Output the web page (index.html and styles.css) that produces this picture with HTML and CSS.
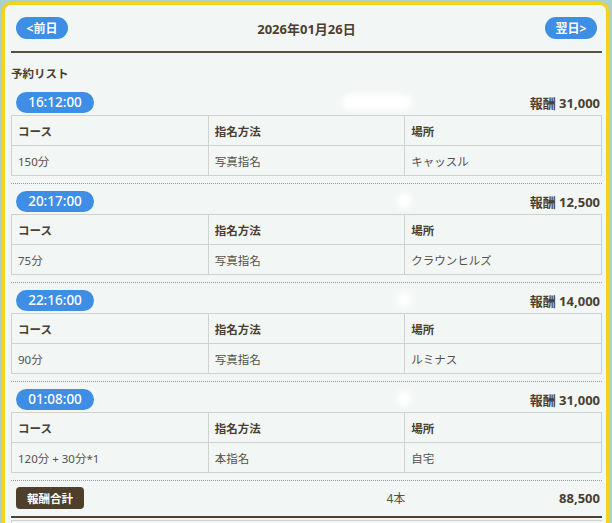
FILE: index.html
```html
<!DOCTYPE html>
<html lang="ja">
<head>
<meta charset="utf-8">
<title>予約リスト</title>
<link rel="stylesheet" href="styles.css">
</head>
<body>
<div class="panel">
  <div class="daybar">
    <a class="pill nav-btn">&lt;前日</a>
    <div class="date">2026年01月26日</div>
    <a class="pill nav-btn">翌日&gt;</a>
  </div>
  <div class="list-label">予約リスト</div>

  <div class="entry">
    <div class="entry-head">
      <span class="pill time">16:12:00</span>
      <span class="blur blur-wide"></span>
      <span class="reward">報酬 31,000</span>
    </div>
    <table class="detail">
      <tr><th>コース</th><th>指名方法</th><th>場所</th></tr>
      <tr><td>150分</td><td>写真指名</td><td>キャッスル</td></tr>
    </table>
  </div>

  <div class="entry">
    <div class="entry-head">
      <span class="pill time">20:17:00</span>
      <span class="blur"></span>
      <span class="reward">報酬 12,500</span>
    </div>
    <table class="detail">
      <tr><th>コース</th><th>指名方法</th><th>場所</th></tr>
      <tr><td>75分</td><td>写真指名</td><td>クラウンヒルズ</td></tr>
    </table>
  </div>

  <div class="entry">
    <div class="entry-head">
      <span class="pill time">22:16:00</span>
      <span class="blur"></span>
      <span class="reward">報酬 14,000</span>
    </div>
    <table class="detail">
      <tr><th>コース</th><th>指名方法</th><th>場所</th></tr>
      <tr><td>90分</td><td>写真指名</td><td>ルミナス</td></tr>
    </table>
  </div>

  <div class="entry">
    <div class="entry-head">
      <span class="pill time">01:08:00</span>
      <span class="blur"></span>
      <span class="reward">報酬 31,000</span>
    </div>
    <table class="detail">
      <tr><th>コース</th><th>指名方法</th><th>場所</th></tr>
      <tr><td>120分 + 30分*1</td><td>本指名</td><td>自宅</td></tr>
    </table>
  </div>

  <div class="total">
    <span class="total-label">報酬合計</span>
    <span class="total-count">4本</span>
    <span class="total-sum">88,500</span>
  </div>
  <div class="next-block"></div>
</div>
</body>
</html>
```

FILE: styles.css
```css
html, body {
  margin: 0;
  padding: 0;
}
body {
  background: #a9d2c9;
  font-family: "Noto Sans", "Noto Sans CJK JP", sans-serif;
  color: #4a3f30;
  padding: 2px 3px 0 2px;
  height: 523px;
  box-sizing: border-box;
  overflow: hidden;
}
.panel {
  background: #f2f6f5;
  border: 3px solid #f6d21a;
  border-bottom: none;
  border-radius: 9px 9px 0 0;
  padding: 0 4px 0 6px;
  height: 100%;
  box-sizing: border-box;
  overflow: hidden;
}
.daybar {
  display: flex;
  align-items: center;
  justify-content: space-between;
  padding: 12px 5px;
  border-bottom: 2px solid #5b5040;
}
.pill {
  display: inline-flex;
  align-items: center;
  justify-content: center;
  background: #3d8ee4;
  color: #fff;
  border-radius: 11px;
  height: 22px;
}
.nav-btn {
  width: 52px;
  font-size: 12px;
  font-weight: 700;
}
.date {
  font-size: 13px;
  font-weight: 700;
}
.list-label {
  font-size: 11.5px;
  font-weight: 700;
  line-height: 18px;
  padding: 12px 0 2px;
}
.entry {
  padding: 6px 0 7px;
  border-bottom: 1px dotted #9a9a9a;
}
.entry-head {
  display: flex;
  align-items: center;
  height: 22px;
  margin-bottom: 2px;
  padding-left: 5px;
}
.time {
  width: 78px;
  height: 21px;
  font-size: 13.5px;
  font-weight: 500;
}
.blur {
  margin-left: auto;
  width: 16px;
  height: 16px;
  background: #ffffff;
  border-radius: 8px;
  filter: blur(3px);
}
.blur-wide {
  width: 70px;
}
.reward {
  width: 188px;
  text-align: right;
  font-size: 13px;
  font-weight: 700;
  padding-right: 2px;
}
.detail {
  width: 100%;
  table-layout: fixed;
  border-collapse: collapse;
}
.detail th,
.detail td {
  border: 1px solid #d0d2d0;
  height: 29px;
  padding: 0 6px;
  text-align: left;
  font-size: 11.5px;
}
.detail th {
  font-weight: 700;
  color: #4a3f30;
}
.detail td {
  font-weight: 400;
  color: #57504a;
}
.total {
  display: grid;
  grid-template-columns: 1fr 1fr 1fr;
  align-items: center;
  padding: 6px 2px 7px 5px;
  border-bottom: 2px solid #4f4230;
}
.total-label {
  justify-self: start;
  background: #4d3f2c;
  color: #fff;
  font-size: 11.5px;
  font-weight: 700;
  width: 68px;
  height: 22px;
  display: inline-flex;
  align-items: center;
  justify-content: center;
  border-radius: 4px;
}
.total-count {
  text-align: right;
  font-size: 12px;
  color: #57504a;
}
.total-sum {
  text-align: right;
  font-size: 13px;
  font-weight: 700;
}
.next-block {
  margin-top: 2px;
  border-top: 1px solid #d0d2d0;
  border-left: 1px solid #d0d2d0;
  height: 20px;
}
```
